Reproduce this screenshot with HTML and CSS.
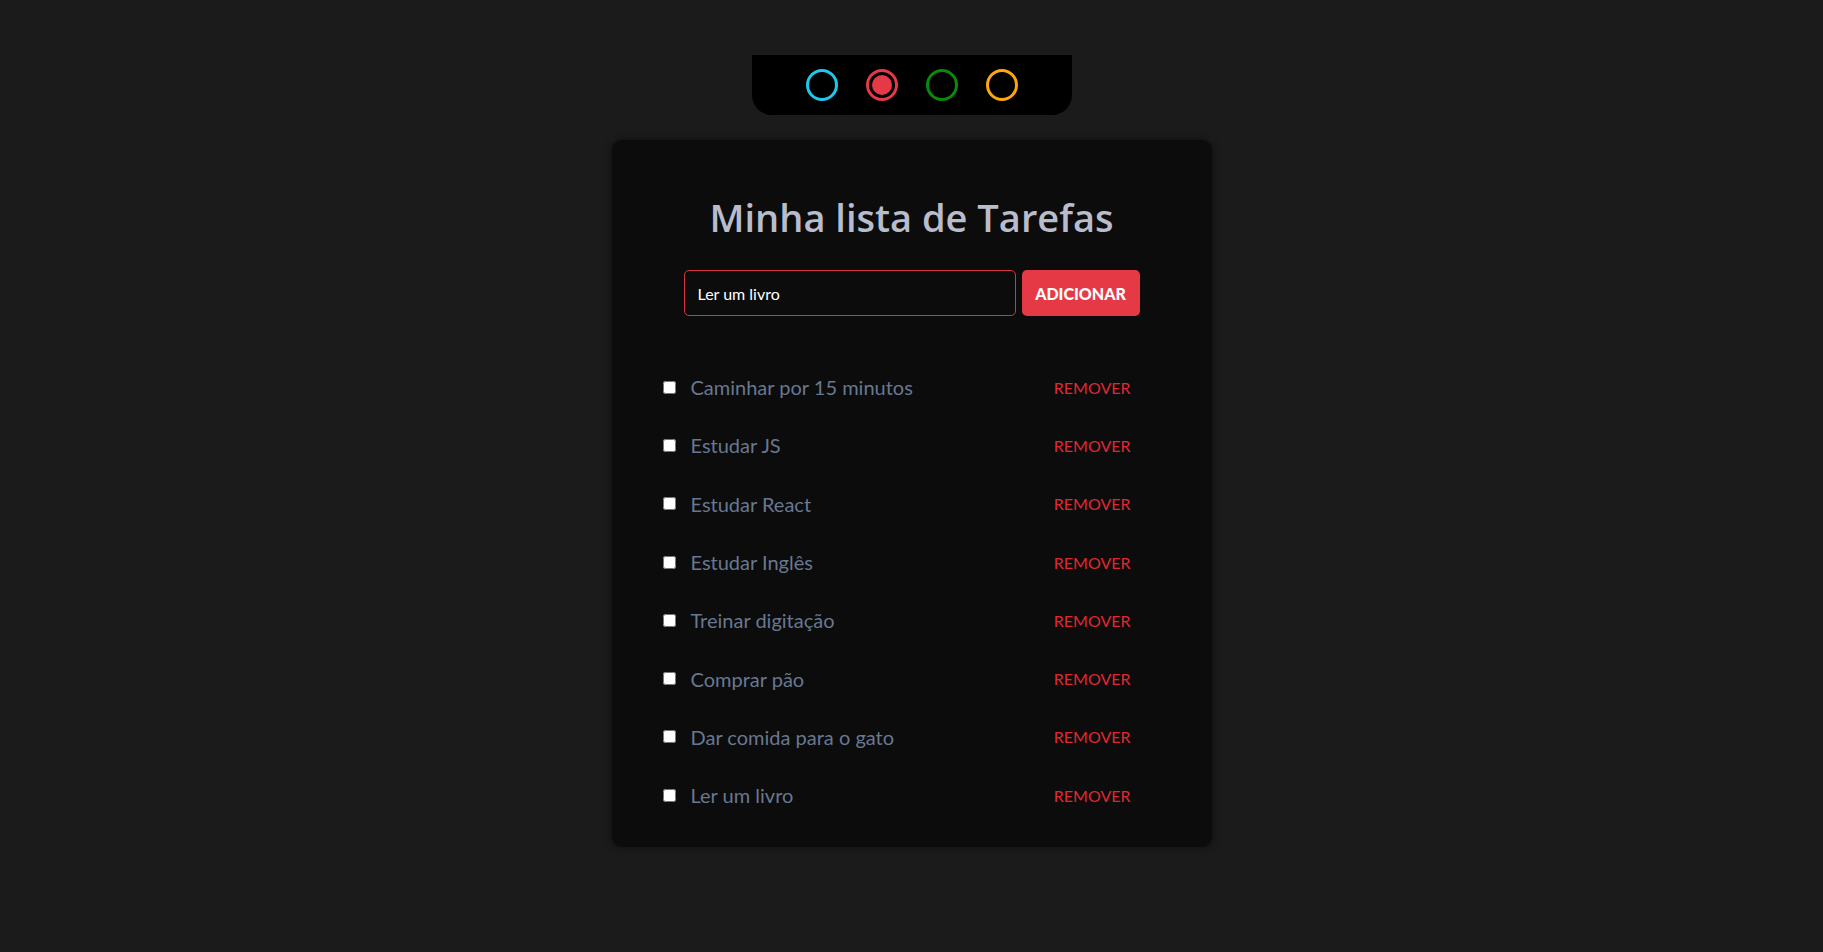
FILE: index.html
```html
<!DOCTYPE html>
<html lang="pt-BR">
<head>
<meta charset="utf-8">
<title>Minha lista de Tarefas</title>
<link rel="stylesheet" href="styles.css">
</head>
<body>
  <div class="themes">
    <button class="theme theme-blue" aria-label="Azul"></button>
    <button class="theme theme-red active" aria-label="Vermelho"></button>
    <button class="theme theme-green" aria-label="Verde"></button>
    <button class="theme theme-orange" aria-label="Laranja"></button>
  </div>

  <main class="card">
    <h1 class="title">Minha lista de Tarefas</h1>
    <form class="add-form">
      <input class="add-input" type="text" value="Ler um livro">
      <button class="add-btn" type="button">ADICIONAR</button>
    </form>
    <ul class="tasks">
      <li class="task"><label class="task-label"><input type="checkbox" class="task-check"><span>Caminhar por 15 minutos</span></label><button class="remove">REMOVER</button></li>
      <li class="task"><label class="task-label"><input type="checkbox" class="task-check"><span>Estudar JS</span></label><button class="remove">REMOVER</button></li>
      <li class="task"><label class="task-label"><input type="checkbox" class="task-check"><span>Estudar React</span></label><button class="remove">REMOVER</button></li>
      <li class="task"><label class="task-label"><input type="checkbox" class="task-check"><span>Estudar Inglês</span></label><button class="remove">REMOVER</button></li>
      <li class="task"><label class="task-label"><input type="checkbox" class="task-check"><span>Treinar digitação</span></label><button class="remove">REMOVER</button></li>
      <li class="task"><label class="task-label"><input type="checkbox" class="task-check"><span>Comprar pão</span></label><button class="remove">REMOVER</button></li>
      <li class="task"><label class="task-label"><input type="checkbox" class="task-check"><span>Dar comida para o gato</span></label><button class="remove">REMOVER</button></li>
      <li class="task"><label class="task-label"><input type="checkbox" class="task-check"><span>Ler um livro</span></label><button class="remove">REMOVER</button></li>
    </ul>
  </main>
</body>
</html>
```

FILE: styles.css
```css
* { box-sizing: border-box; }

body {
  margin: 0;
  background: #1b1b1b;
  font-family: Lato, "Noto Sans", sans-serif;
  min-height: 952px;
}

.themes {
  width: 320px;
  height: 60px;
  margin: 55px auto 0;
  background: #000;
  border-radius: 0 0 20px 20px;
  display: flex;
  align-items: center;
  justify-content: center;
  gap: 28px;
}

.theme {
  width: 32px;
  height: 32px;
  border-radius: 50%;
  border: 3px solid;
  background: transparent;
  padding: 0;
  cursor: pointer;
}
.theme-blue { border-color: #1ec8ec; }
.theme-red { border-color: #e63946; }
.theme-green { border-color: #0a8a0a; }
.theme-orange { border-color: #ffa50f; }
.theme.active {
  padding: 3px;
  background: #e63946;
  background-clip: content-box;
}

.card {
  width: 600px;
  margin: 25px auto 0;
  background: #0c0c0c;
  border-radius: 10px;
  box-shadow: 0 0 8px rgba(0, 0, 0, 0.45);
  padding: 55px 0 23px;
}

.title {
  margin: 0;
  text-align: center;
  font-family: "Open Sans", Lato, sans-serif;
  font-size: 38px;
  line-height: 44px;
  font-weight: 600;
  color: #b9bdcb;
}

.add-form {
  margin-top: 31px;
  display: flex;
  justify-content: center;
  gap: 6px;
}

.add-input {
  width: 332px;
  height: 46px;
  background: #0c0c0c;
  border: 1px solid #d8343f;
  border-radius: 5px;
  color: #fff;
  font-family: inherit;
  font-size: 16px;
  padding: 0 13px;
  outline: none;
}

.add-btn {
  width: 118px;
  height: 46px;
  background: #e63946;
  border: none;
  border-radius: 5px;
  color: #fff;
  font-family: inherit;
  font-weight: 900;
  font-size: 16px;
  padding: 0;
}

.tasks {
  list-style: none;
  margin: 42px 0 0;
  padding: 0 81px 0 51px;
}

.task {
  height: 58.3px;
  display: flex;
  align-items: center;
  justify-content: space-between;
}

.task-label {
  display: flex;
  align-items: center;
  gap: 15px;
  color: #687891;
  font-size: 20px;
}

.task-check {
  margin: 0;
  width: 13px;
  height: 13px;
}

.remove {
  background: none;
  border: none;
  padding: 0;
  color: #e02832;
  font-family: inherit;
  font-size: 16px;
  cursor: pointer;
}
```
